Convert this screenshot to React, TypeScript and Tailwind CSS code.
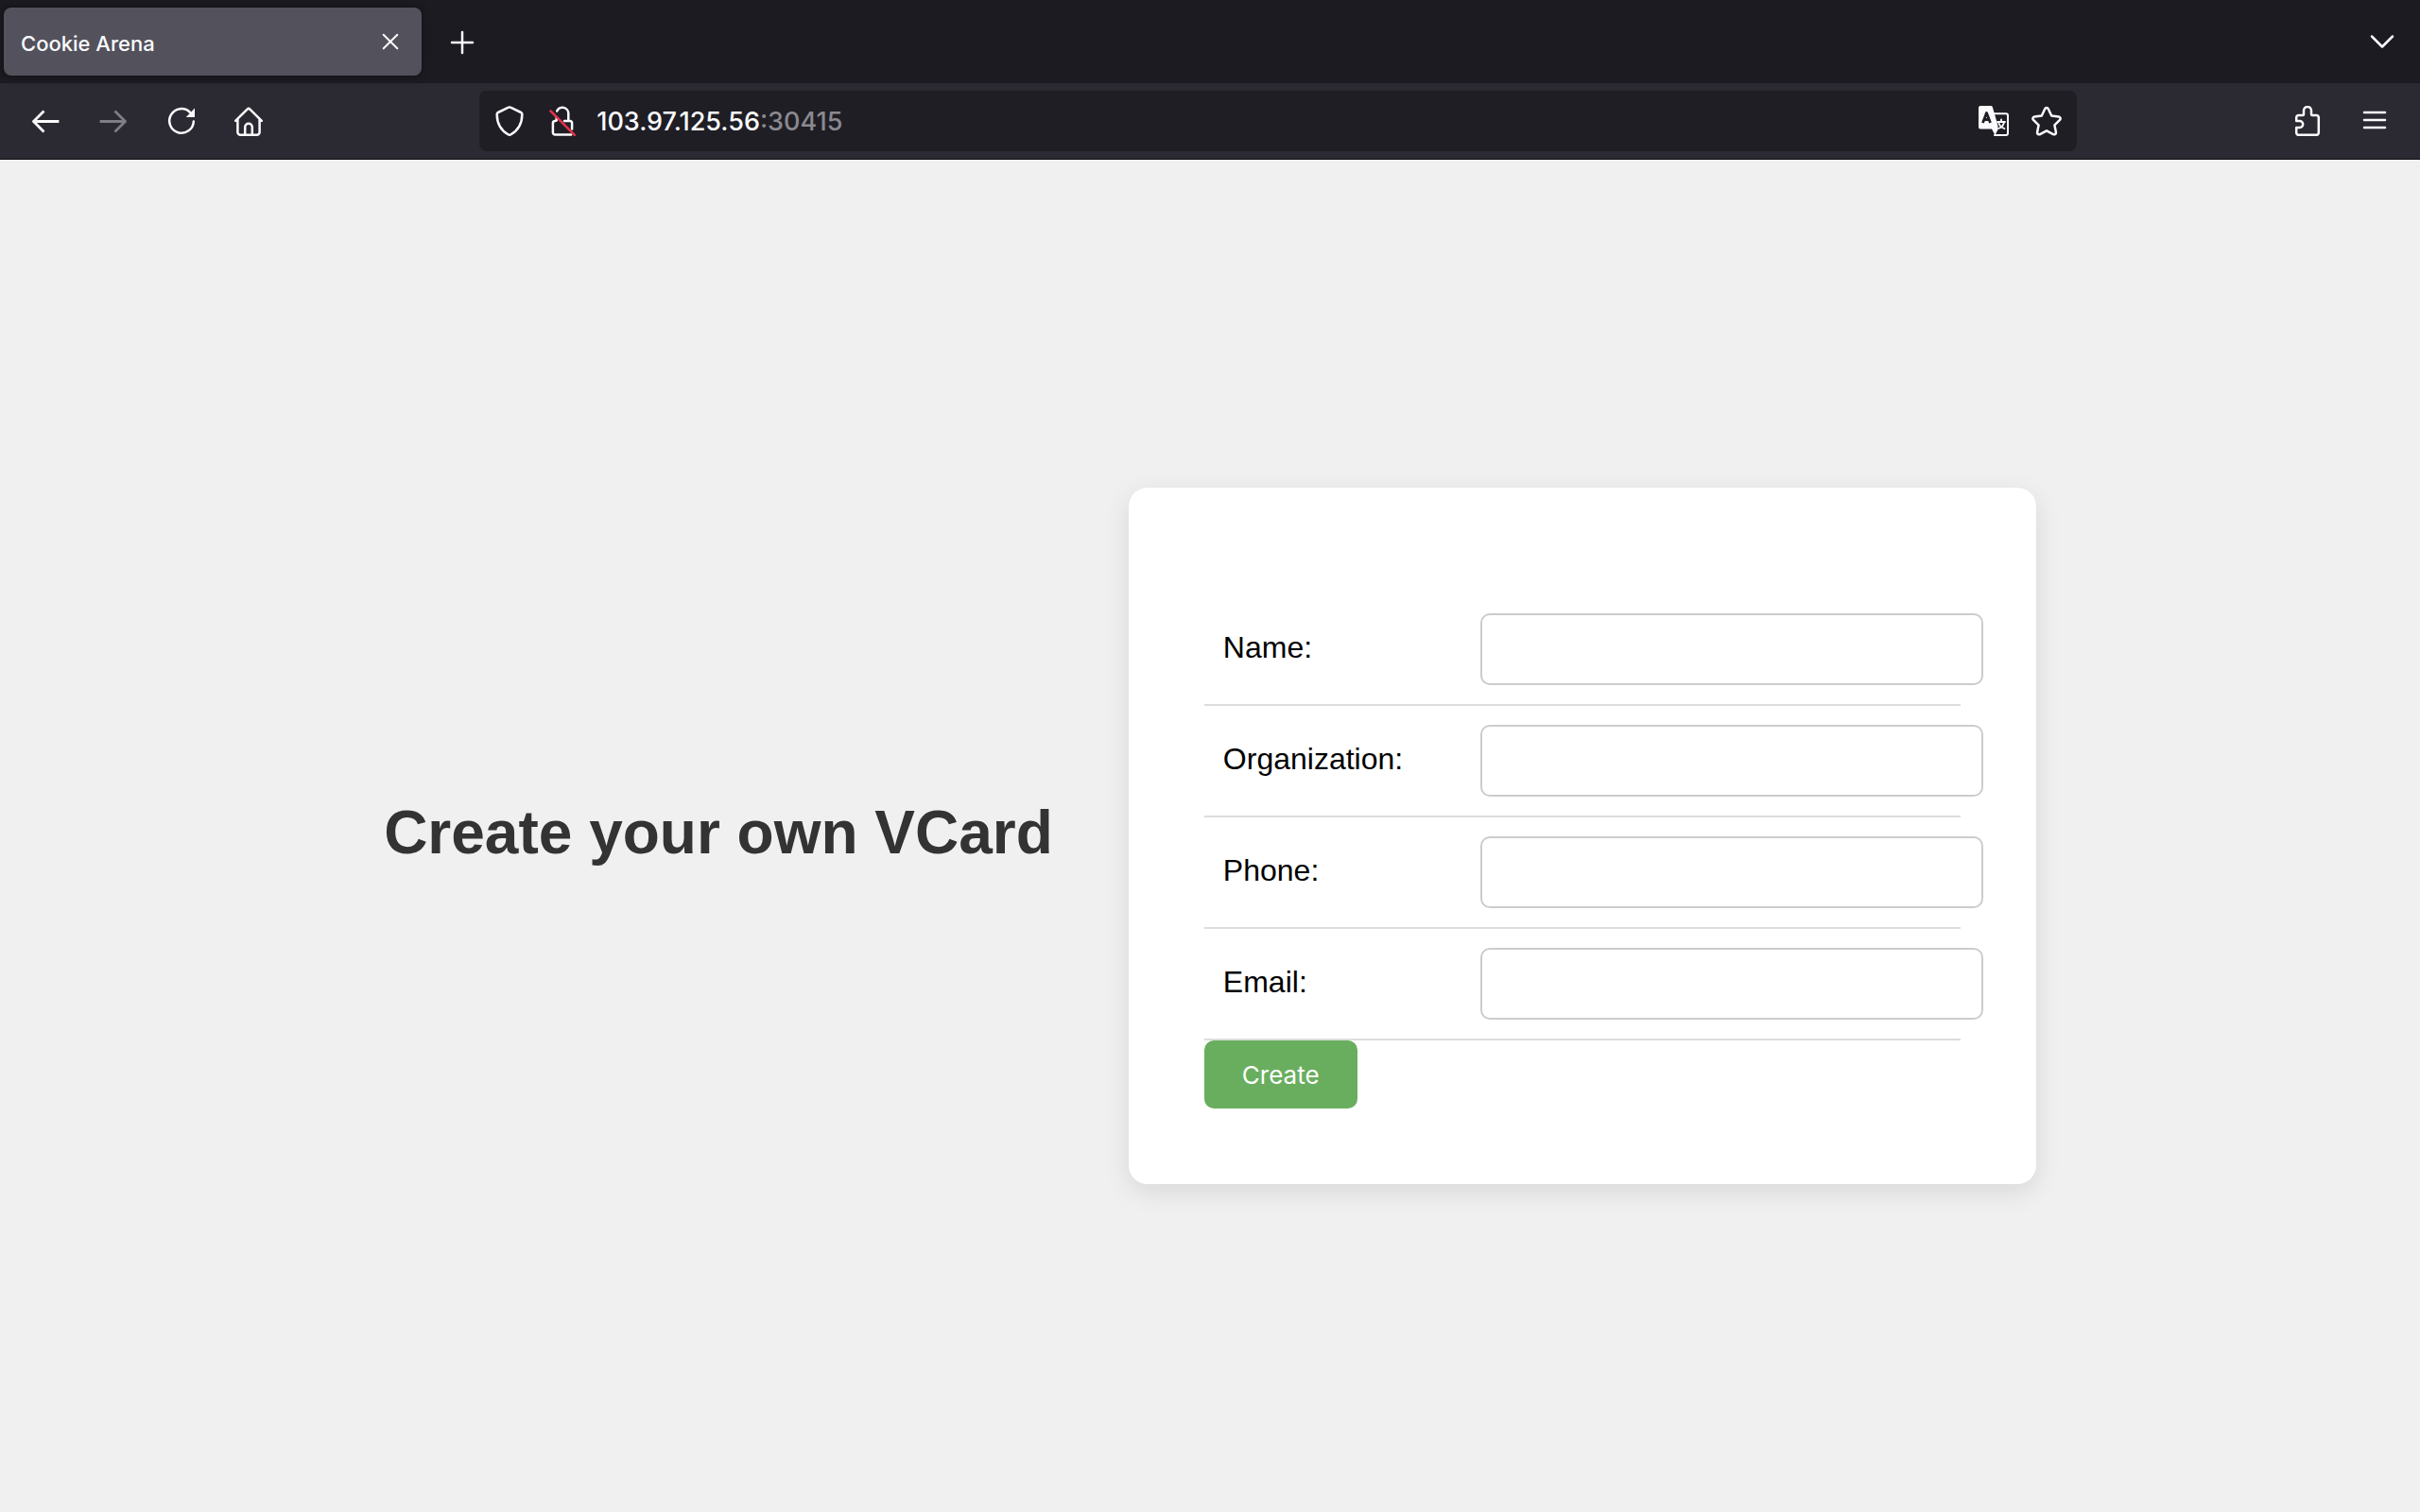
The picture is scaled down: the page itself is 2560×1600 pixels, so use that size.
import type { ReactNode } from "react";

type IconProps = { children: ReactNode; className?: string };

function Icon({ children, className = "" }: IconProps) {
  return (
    <svg
      viewBox="0 0 32 32"
      className={`size-8 shrink-0 ${className}`}
      fill="none"
      stroke="currentColor"
      strokeWidth="2.5"
      strokeLinecap="round"
      strokeLinejoin="round"
      aria-hidden="true"
    >
      {children}
    </svg>
  );
}

function ToolButton({ label, className = "", children }: { label: string; className?: string; children: ReactNode }) {
  return (
    <button type="button" aria-label={label} className={`flex h-16 w-18 items-center justify-center ${className}`}>
      <Icon>{children}</Icon>
    </button>
  );
}

function TabStrip() {
  return (
    <div className="flex h-22 items-center bg-[#1c1b22] pl-1">
      <div className="flex h-18 w-[442px] items-center justify-between rounded-lg bg-[#53525c] pr-[17px] pl-[18px] shadow-[0_0_8px_rgba(0,0,0,0.5)]">
        <span className="pt-1 text-[22px] leading-8 font-medium">Cookie Arena</span>
        <button type="button" aria-label="Close tab">
          <Icon>
            <path d="M8.7 8.7 23.3 23.3M23.3 8.7 8.7 23.3" strokeWidth="2" />
          </Icon>
        </button>
      </div>
      <button type="button" aria-label="New tab" className="ml-[27px]">
        <Icon>
          <path d="M16 6v22M5 17h22" />
        </Icon>
      </button>
      <button type="button" aria-label="List all tabs" className="mr-6 ml-auto">
        <Icon>
          <path d="M5 10.5 16 21.5 27 10.5" />
        </Icon>
      </button>
    </div>
  );
}

function Toolbar() {
  return (
    <div className="flex h-[81px] items-center border-b border-[#0c0c0d] bg-[#2b2a33]">
      <nav className="flex pl-3">
        <ToolButton label="Back">
          <path d="M29 16.5H4M13.5 6.5 3.5 16.5l10 10" strokeWidth="2.8" strokeLinecap="square" />
        </ToolButton>
        <ToolButton label="Forward" className="text-[#7f7e85]">
          <path d="M3 16.5h25M18.5 6.5l10 10-10 10" strokeWidth="2.8" strokeLinecap="square" />
        </ToolButton>
        <ToolButton label="Reload">
          <path d="M28.8 16.5A12.8 12.8 0 1 1 25 6.8" />
          <path d="M30 2.6V12h-9.2z" fill="currentColor" stroke="none" />
        </ToolButton>
        <ToolButton label="Home">
          <path d="M1.2 15.8 13.6 3.6a2 2 0 0 1 2.8 0L28.8 15.8M3.4 14v14a2.8 2.8 0 0 0 2.8 2.8h17.6a2.8 2.8 0 0 0 2.8-2.8V14" />
          <path d="M11.2 30V22.5a3.8 3.8 0 0 1 7.6 0V30" />
        </ToolButton>
      </nav>

      <div className="flex-1" />

      <div className="flex h-16 w-[66%] items-center rounded-lg bg-[#1f1e25] px-4">
        <button type="button" aria-label="Tracking protection">
          <Icon>
            <path d="M14.9 1.7a2.4 2.4 0 0 1 2.2 0l11 5.3a2 2 0 0 1 1.2 2c0 9.5-4 17-12.2 21.5a2.4 2.4 0 0 1-2.2 0C6.7 26 2.7 18.5 2.7 9a2 2 0 0 1 1.2-2z" />
          </Icon>
        </button>
        <button type="button" aria-label="Connection not secure" className="ml-6">
          <Icon>
            <path d="M10.2 5.6A6.3 6.3 0 0 1 22.3 8.2V15.5M9.7 12V15.5" />
            <path d="M8.500 15.9H8.200a2.300 2.300 0 0 0-2.300 2.300v10a2.300 2.300 0 0 0 2.300 2.300h17M18 15.900h5.800a2.300 2.300 0 0 1 2.300 2.300V24.500" />
            <path d="M3.500 5.500 28.800 30.800" stroke="#e5324b" />
          </Icon>
        </button>
        <div className="relative ml-5 flex-1 pt-0.5 text-[27px] leading-10 font-medium">
          <span aria-hidden="true">
            103.97.125.56<span className="text-[#8a898f]">:30415</span>
          </span>
          <input
            aria-label="Address"
            defaultValue="103.97.125.56:30415"
            className="absolute inset-0 w-full bg-transparent text-transparent outline-none"
          />
        </div>
        <button type="button" aria-label="Translate page">
          <Icon>
            <path
              d="M2 0h11a2 2 0 0 1 1.9 1.4L20.5 21v4l-3 6-3.5-6.5H2a2 2 0 0 1-2-2V2a2 2 0 0 1 2-2z"
              fill="currentColor"
              stroke="none"
            />
            <path d="M4.5 18 8.5 7.5 12.5 18M6 14.5h5" stroke="#1f1e25" strokeWidth="2.8" strokeLinecap="butt" />
            <path d="M16 8.2h13a2 2 0 0 1 2 2V29a2 2 0 0 1-2 2H17" strokeWidth="2" />
            <path d="M20 17h8M24 14.5V17M27 17.5c-.8 3.5-3 5.5-6 6.5M21.5 18.5c1 2.7 3 4.7 6 5.5" strokeWidth="1.8" />
          </Icon>
        </button>
        <button type="button" aria-label="Bookmark this page" className="ml-6">
          <Icon>
            <path d="M14.2 3.2a2 2 0 0 1 3.6 0l3.4 7.3 7.7 1a2 2 0 0 1 1.1 3.4l-5.6 5.4 1.5 7.7a2 2 0 0 1-2.9 2.1L16 26.3l-7 3.8A2 2 0 0 1 6.1 28l1.500-7.700L2 14.900a2 2 0 0 1 1.100-3.400l7.700-1z" />
          </Icon>
        </button>
      </div>

      <div className="flex-1" />

      <div className="flex pr-3">
        <ToolButton label="Extensions">
          <path d="M7.5 10H12a1 1 0 0 0 1-1V5a4 4 0 0 1 8 0v4a1 1 0 0 0 1 1h4.5A2.3 2.3 0 0 1 28.8 12.3v16.2a2.3 2.3 0 0 1-2.3 2.3h-19a2.3 2.3 0 0 1-2.3-2.3V23H8.7a3.5 3.5 0 0 0 0-7H5.2v-3.7A2.3 2.3 0 0 1 7.5 10z" />
        </ToolButton>
        <ToolButton label="Open menu">
          <path d="M5 7h22M5 15h22M5 23h22" />
        </ToolButton>
      </div>
    </div>
  );
}

const fields = [
  { id: "name", label: "Name:", type: "text" },
  { id: "organization", label: "Organization:", type: "text" },
  { id: "phone", label: "Phone:", type: "tel" },
  { id: "email", label: "Email:", type: "email" },
];

function VCardForm() {
  return (
    <form
      className="w-[960px] rounded-[20px] bg-white px-20 pt-[113px] pb-20 shadow-[0_8px_28px_rgba(0,0,0,0.1)]"
      onSubmit={(event) => event.preventDefault()}
    >
      <table className="w-full table-fixed border-collapse">
        <tbody>
          {fields.map((field) => (
            <tr key={field.id} className="border-b-2 border-[#dddddd]">
              <td className="w-[34%] px-5 pb-1 text-[32px] leading-9 text-black">
                <label htmlFor={field.id}>{field.label}</label>
              </td>
              <td className="p-5">
                <input
                  id={field.id}
                  name={field.id}
                  type={field.type}
                  className="box-content block h-8 w-full rounded-[10px] border-2 border-[#cccccc] bg-white p-5 text-[26px] text-black"
                />
              </td>
            </tr>
          ))}
        </tbody>
      </table>
      <button
        type="submit"
        className="block rounded-[10px] bg-[#69ae5e] px-10 pt-[21px] pb-[19px] font-['Inter',sans-serif] text-[26px] leading-8 text-white"
      >
        Create
      </button>
    </form>
  );
}

export default function App() {
  return (
    <div className="flex min-h-screen flex-col">
      <header className="font-['Inter',sans-serif] text-[#fbfbfe]">
        <TabStrip />
        <Toolbar />
      </header>
      <main className="flex flex-1 items-center justify-center gap-20 bg-[#f0f0f0] font-['Liberation_Sans',Arial,sans-serif]">
        <h1 className="pb-2 text-[64px] leading-18 font-bold text-[#333333]">Create your own VCard</h1>
        <VCardForm />
      </main>
    </div>
  );
}
